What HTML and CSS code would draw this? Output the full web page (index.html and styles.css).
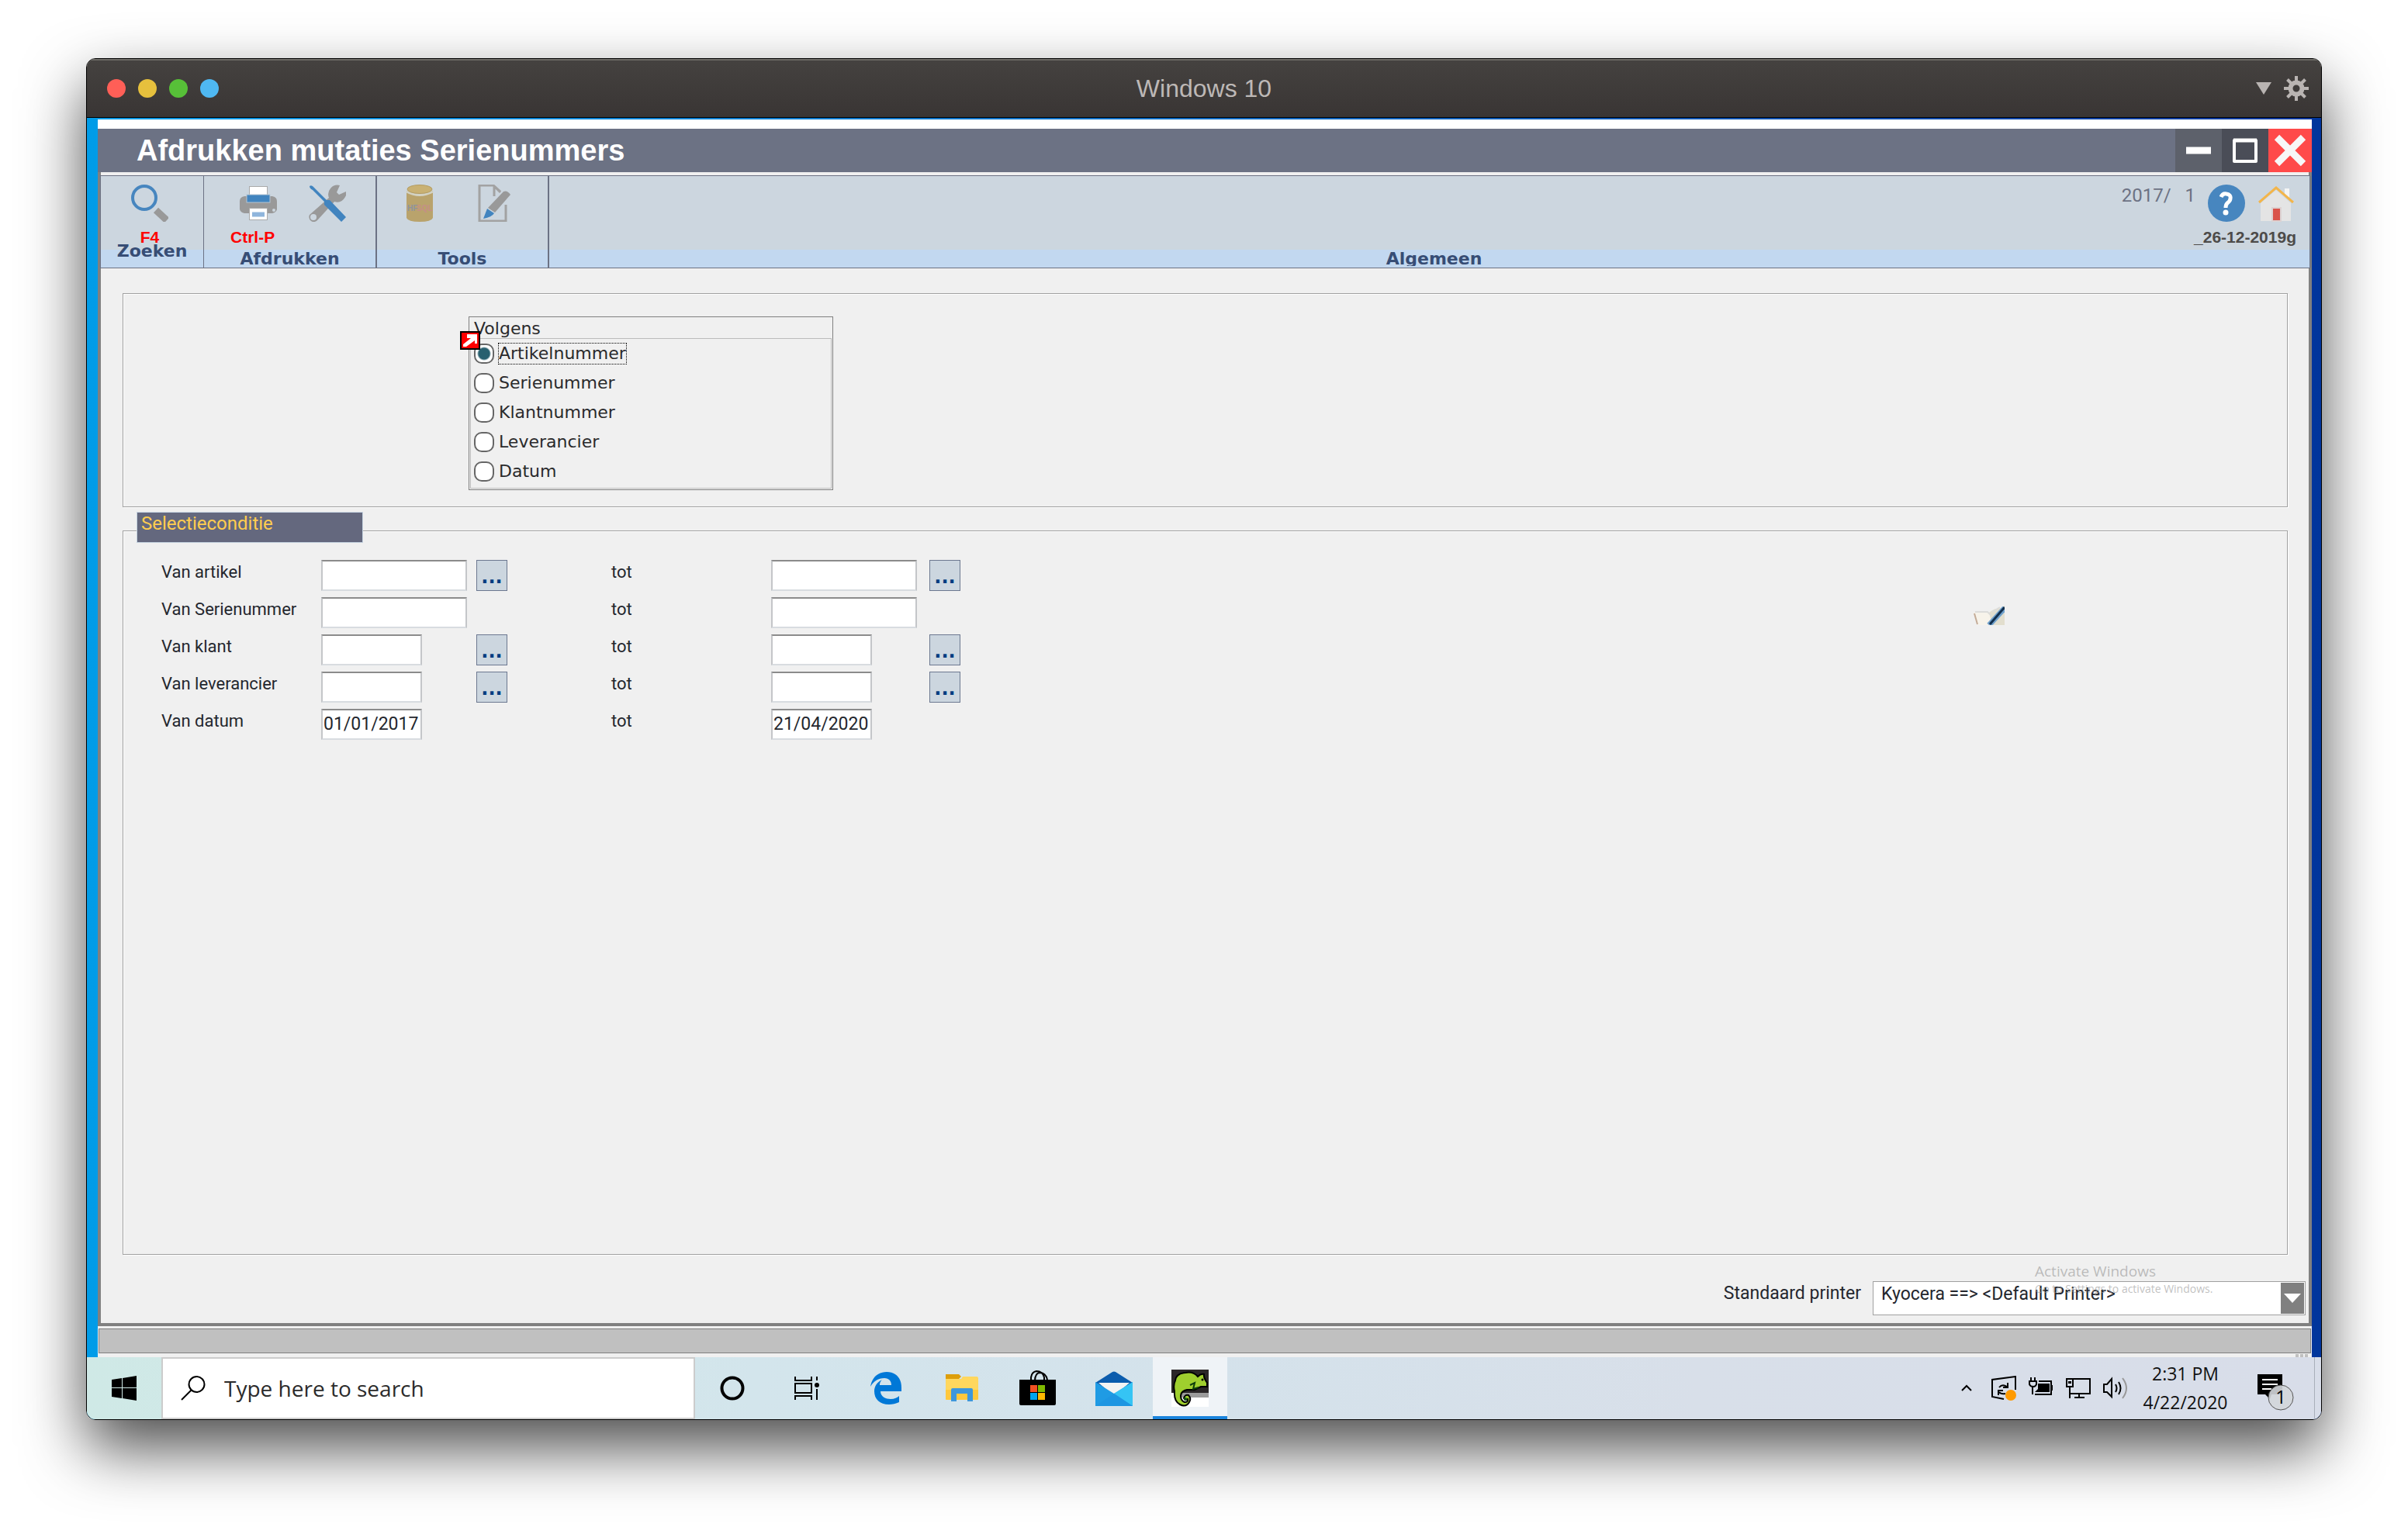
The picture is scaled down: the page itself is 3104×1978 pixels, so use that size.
FILE: index.html
```html
<!DOCTYPE html>
<html lang="nl">
<head>
<meta charset="utf-8">
<title>Windows 10</title>
<link rel="stylesheet" href="styles.css">
</head>
<body>
<div class="vm">
  <header class="vm-bar">
    <div class="lights">
      <button class="light red" aria-label="Close"></button>
      <button class="light yellow" aria-label="Minimize"></button>
      <button class="light green" aria-label="Zoom"></button>
      <button class="light blue" aria-label="Coherence"></button>
    </div>
    <h1 class="vm-title">Windows 10</h1>
    <div class="vm-tools">
      <button class="plain" aria-label="Menu"><svg width="20" height="16" viewBox="0 0 20 16"><path d="M0 0H20L10 16Z" fill="#b9b4b2"/></svg></button>
      <button class="plain" aria-label="Settings"><svg width="32" height="32" viewBox="-16 -16 32 32"><g fill="none" stroke="#b9b4b2"><circle r="7.5" stroke-width="6"/><path stroke-width="4" d="M0-9V-16M0 9V16M-9 0H-16M9 0H16M6.500-6.500L11.500-11.500M-6.500-6.500L-11.500-11.500M6.500 6.500L11.500 11.500M-6.500 6.500L-11.500 11.500"/></g></svg></button>
    </div>
  </header>

  <div class="desktop">
    <main class="app">
      <div class="app-bar">
        <h2 class="app-title">Afdrukken mutaties Serienummers</h2>
        <button class="win min" aria-label="Minimaliseren"><svg width="32" height="32" viewBox="0 0 32 32"><path d="M0 16H32" stroke="#fff" stroke-width="9"/></svg></button>
        <button class="win max" aria-label="Maximaliseren"><svg width="32" height="32" viewBox="0 0 32 32"><rect x="2" y="3" width="28" height="27" fill="none" stroke="#fff" stroke-width="4" stroke-linejoin="round"/><path d="M1 3H31" stroke="#fff" stroke-width="5"/></svg></button>
        <button class="win close" aria-label="Sluiten"><svg width="42" height="42" viewBox="0 0 42 42"><path d="M4 4L38 38M38 4L4 38" stroke="#f7f7f7" stroke-width="9"/></svg></button>
      </div>

      <div class="frame">
        <nav class="toolbar">
          <div class="group zoeken">
            <div class="tools">
              <button class="tool"><svg width="48" height="48" viewBox="0 0 48 48"><circle cx="17" cy="17" r="15" fill="none" stroke="#4786bf" stroke-width="4"/><path d="M32 33L46 46" stroke="#999" stroke-width="9"/></svg><span class="key">F4</span></button>
            </div>
            <div class="caption">Zoeken</div>
          </div>
          <div class="group afdrukken">
            <div class="tools">
              <button class="tool wide"><svg width="48" height="48" viewBox="0 0 48 48"><path d="M6 15H42Q48 16 48 22V32Q47 36 42 37H6Q1 36 0 32V22Q0 16 6 15Z" fill="#999"/><rect x="12.500" y="2.500" width="23" height="13" fill="#fff" stroke="#aaa"/><rect x="9" y="13" width="30" height="10" fill="#4184bf" stroke="#b5c5d3"/><rect x="12.500" y="30.500" width="23" height="15" fill="#fff" stroke="#aaa"/><path d="M16 37H32M16 40H32" stroke="#8fb5dc" stroke-width="3"/><circle cx="44" cy="33" r="2" fill="#ccd6df"/></svg><span class="key">Ctrl-P</span></button>
              <button class="tool" aria-label="Instellingen"><svg width="48" height="48" viewBox="0 0 48 48"><path d="M40 1A12 12 0 0 0 26 17L1 39Q-1 44 3 47Q8 50 12 45L33 22Q43 25 48 14V9L39 13L36 10Z" fill="#999"/><circle cx="6" cy="42" r="4" fill="#ccd6df"/><path d="M1 2Q4 0 7 4L23 20H27L48 42L42 48L20 26V22L5 7Q1 5 1 2Z" fill="#4184bf"/></svg></button>
            </div>
            <div class="caption">Afdrukken</div>
          </div>
          <div class="group extra">
            <div class="tools">
              <button class="tool" aria-label="HFSQL"><svg width="48" height="48" viewBox="0 0 48 48"><path d="M7 8Q24 17 41 8V43Q39 48 24 48Q9 48 7 43Z" fill="#b9a36c"/><path d="M7 9Q24 18 41 9" fill="none" stroke="#d3d2c3" stroke-width="3"/><ellipse cx="24" cy="6" rx="16" ry="5.500" fill="#c9b173" stroke="#b39c62"/><text x="8" y="34" class="db-a">HF</text><text x="20" y="34" class="db-b">SQL</text></svg></button>
              <button class="tool" aria-label="Bewerken"><svg width="48" height="48" viewBox="0 0 48 48"><path d="M30 9L21 1H3V47H37V26M22 1V15M22 2L30 10" fill="none" stroke="#a2a2a2" stroke-width="3"/><path d="M14 30L34 9Q39 7 43 13L23 36Z" fill="#999"/><path d="M13 31L22 37Q19 42 8 44Z" fill="#4184bf"/></svg></button>
            </div>
            <div class="caption">Tools</div>
          </div>
          <div class="group general">
            <div class="tools">
              <span class="period">2017/&nbsp;&nbsp; 1</span>
              <button class="tool" aria-label="Help"><svg width="48" height="48" viewBox="0 0 48 48"><circle cx="24" cy="24" r="24" fill="#4786bf"/><path d="M17 16Q19 11 24 12Q30 13 29 18Q29 21 25 24Q23 26 23 30" fill="none" stroke="#fff" stroke-width="5"/><circle cx="23" cy="36" r="3.500" fill="#fff"/></svg></button>
              <button class="tool" aria-label="Home"><svg width="48" height="48" viewBox="0 0 48 48"><path d="M35 5H41V17L35 12Z" fill="#f4f4f4"/><path d="M4 24L24 7L43 24V47H4Z" fill="#e4e4e4"/><path d="M19 30H30V47H19Z" fill="#d9534a" stroke="#dcd2d2" stroke-width="2"/><path d="M2 23L24 4L46 23" fill="none" stroke="#f3b54a" stroke-width="3"/></svg></button>
            </div>
            <div class="release">_26-12-2019g</div>
            <div class="caption clipped">Algemeen</div>
          </div>
        </nav>

        <form class="form">
          <section class="panel">
            <fieldset class="choice">
              <legend>Volgens</legend>
              <div class="options">
                <label><input type="radio" name="volgens" checked><span class="focus">Artikelnummer</span></label>
                <label><input type="radio" name="volgens"><span>Serienummer</span></label>
                <label><input type="radio" name="volgens"><span>Klantnummer</span></label>
                <label><input type="radio" name="volgens"><span>Leverancier</span></label>
                <label><input type="radio" name="volgens"><span>Datum</span></label>
              </div>
              <svg class="marker" width="26" height="24" viewBox="0 0 26 24"><rect x="1" y="1" width="24" height="22" fill="#f00" stroke="#000" stroke-width="2"/><path d="M9 4H22V16H19V12L8 20H4V17L14 9H9Z" fill="#fff"/></svg>
            </fieldset>
          </section>

          <section class="panel selection">
            <h3 class="badge">Selectieconditie</h3>
            <div class="selection-body">
              <div class="grid">
                <label class="c1" for="a1">Van artikel</label><input class="c2" id="a1"><button type="button" class="c3 pick">...</button>
                <label class="c4" for="a2">tot</label><input class="c5" id="a2"><button type="button" class="c6 pick">...</button>
                <label class="c1" for="s1">Van Serienummer</label><input class="c2" id="s1">
                <label class="c4" for="s2">tot</label><input class="c5" id="s2">
                <label class="c1" for="k1">Van klant</label><input class="c2 short" id="k1"><button type="button" class="c3 pick">...</button>
                <label class="c4" for="k2">tot</label><input class="c5 short" id="k2"><button type="button" class="c6 pick">...</button>
                <label class="c1" for="l1">Van leverancier</label><input class="c2 short" id="l1"><button type="button" class="c3 pick">...</button>
                <label class="c4" for="l2">tot</label><input class="c5 short" id="l2"><button type="button" class="c6 pick">...</button>
                <label class="c1" for="d1">Van datum</label><input class="c2 short" id="d1" value="01/01/2017">
                <label class="c4" for="d2">tot</label><input class="c5 short" id="d2" value="21/04/2020">
              </div>
              <svg class="note" width="40" height="28" viewBox="0 0 40 28"><path d="M0 12L16 11Q20 11 22 16L24 28H6Z" fill="#f7f3ea"/><path d="M1 13L5 27" stroke="#c4ac98" stroke-width="2"/><path d="M20 12Q26 6 36 6L40 3V28H24Z" fill="#e2dece"/><path d="M2 11H18L22 15M24 11L34 5" fill="none" stroke="#dcdcda" stroke-width="2"/><path d="M20 28L40 6" stroke="#6fa0cc" stroke-width="7"/><path d="M21 27L40 5" stroke="#12304f" stroke-width="3"/></svg>
            </div>
          </section>

          <div class="printer">
            <label for="printer">Standaard printer</label>
            <div class="combo">
              <select id="printer"><option>Kyocera ==&gt; &lt;Default Printer&gt;</option></select>
              <span class="arrow"><svg width="22" height="12" viewBox="0 0 22 12"><path d="M0 0H22L11 12Z" fill="#fff"/></svg></span>
            </div>
            <div class="watermark"><p class="wm-title">Activate Windows</p><p class="wm-text">Go to Settings to activate Windows.</p></div>
          </div>
        </form>
      </div>
      <div class="status"></div>
      <div class="grip"><i></i><i></i><i></i></div>
    </main>

    <footer class="taskbar">
      <button class="start" aria-label="Start"><svg width="32" height="32" viewBox="0 0 32 32"><path d="M0 5L13 3V15H0ZM14 3L32 0V15H14ZM0 16H13V29L0 27ZM14 16H32V32L14 29Z"/></svg></button>
      <label class="search">
        <svg width="32" height="32" viewBox="0 0 32 32" fill="none" stroke="#000" stroke-width="2"><circle cx="20.500" cy="11" r="10"/><path d="M14 18L1 31"/></svg>
        <input type="search" placeholder="Type here to search" aria-label="Search">
      </label>
      <div class="pinned">
        <button class="task" aria-label="Cortana"><svg width="32" height="32" viewBox="0 0 32 32"><circle cx="16" cy="16" r="13.500" fill="none" stroke="#000" stroke-width="4"/></svg></button>
        <button class="task" aria-label="Task View"><svg width="32" height="30" viewBox="0 0 32 30" fill="none" stroke="#000" stroke-width="2"><path d="M1 0V5H22V0M1 30V25H22V30M1 9H22V21H1ZM29 0V5M29 16V30"/><circle cx="29" cy="11" r="3" fill="#000" stroke="none"/></svg></button>
        <button class="task edge" aria-label="Edge"><svg width="40" height="42" viewBox="0 0 40 42"><path d="M0 19C2 6 11 0 21 0C33 0 40 8 40 20V25H13C13 32 20 35 26 35C31 35 35 33 37 31V39C33 41 28 42 24 42C12 42 5 35 5 25C5 18 9 13 15 10C12 13 12 16 12 17H27C27 11 23 8 18 8C10 8 4 12 0 19Z" fill="#0078d7"/></svg></button>
        <button class="task" aria-label="Explorer"><svg width="42" height="36" viewBox="0 0 42 36"><path d="M0 6H20L22 3H40Q42 3 42 5V33H0Z" fill="#ffd75e"/><path d="M0 20H42V31Q42 33 40 33H2Q0 33 0 31Z" fill="#ffc83d"/><path d="M0 0H17L20 3L17 6H0Z" fill="#dd9e0b"/><path d="M7 35V20Q7 18 9 18H33Q35 18 35 20V35H28V25H14V35Z" fill="#3e97dc"/></svg></button>
        <button class="task" aria-label="Store"><svg width="48" height="46" viewBox="0 0 48 46"><path d="M15 14V9Q16 2 22 1Q30 1 32 9V14M20 14Q20 4 26 3Q34 3 36 12" fill="none" stroke="#000" stroke-width="2"/><path d="M0 12H47V43Q47 45 45 45H2Q0 45 0 43Z"/><path d="M14 19H23V28H14Z" fill="#f25022"/><path d="M24 19H33V28H24Z" fill="#7fba00"/><path d="M14 29H23V38H14Z" fill="#00a4ef"/><path d="M24 29H33V38H24Z" fill="#ffb900"/></svg></button>
        <button class="task" aria-label="Mail"><svg width="48" height="45" viewBox="0 0 48 45"><path d="M0 15L22 1Q24 0 26 1L48 15L24 30Z" fill="#0b5cad"/><path d="M4 15H44L24 32Z" fill="#f3f3f3"/><path d="M0 14V45H48V14L24 29Z" fill="#1f9be4"/><path d="M48 14V45L24 29Z" fill="#35c4f4"/><path d="M24 29L48 45H0Z" fill="#1d96e2"/></svg></button>
        <button class="task active" aria-label="WinDev"><svg width="48" height="48" viewBox="0 0 48 48"><path d="M0 0H48V30H0Z" fill="#2b2728"/><path d="M10 30H48V36H10Z" fill="#9b9b9b"/><path d="M0 30H10V36H48V48H0Z" fill="#fff"/><path d="M5 14Q6 5 18 4Q28 2 34 9Q38 5 42 6Q41 10 46 17V22H38L30 26H20Q12 28 12 34Q12 40 17 42Q22 42 21 38Q18 40 16 37Q17 32 22 33Q26 37 23 42Q19 49 11 45Q3 41 4 28Q2 20 5 14Z" fill="#9fcf2e" stroke="#000" stroke-width="2"/><path d="M24 20L30 17L28 25L35 23" fill="none" stroke="#0b3d0b" stroke-width="2"/><circle cx="40" cy="13" r="1.500"/><circle cx="18" cy="38" r="2" fill="#0c5a12"/></svg></button>
      </div>
      <div class="tray">
        <button class="plain chevron" aria-label="Hidden icons"><svg width="14" height="10" viewBox="0 0 14 10"><path d="M1 8L7 2L13 8" fill="none" stroke="#000" stroke-width="2"/></svg></button>
        <button class="plain" aria-label="Update"><svg width="32" height="32" viewBox="0 0 32 32" fill="none" stroke="#000" stroke-width="2"><path d="M31 18V1L1 5V27L16 30"/><path d="M10 15Q14 10 20 14M21 9V15H15M18 23Q12 24 10 21M9 25V19H15"/><circle cx="25" cy="25" r="7" fill="#ff9a00" stroke="none"/></svg></button>
        <button class="plain" aria-label="Battery"><svg width="32" height="32" viewBox="0 0 32 32" fill="none" stroke="#000" stroke-width="2"><path d="M13 7H29V24H8M30 12V19"/><path d="M12 10H27V21H8L12 17Z" fill="#000" stroke="none"/><path d="M3 2V7M8 2V7M1 7H10V11Q9 14 6 14Q2 14 1 11ZM5 14V24"/></svg></button>
        <button class="plain" aria-label="Network"><svg width="32" height="32" viewBox="0 0 32 32" fill="none" stroke="#000" stroke-width="2"><path d="M9 4H31V23H6M1 4H9V14H1ZM5 14V29M17 23V28M11 28H24M4 7V10M6 7V10"/></svg></button>
        <button class="plain" aria-label="Volume"><svg width="32" height="32" viewBox="0 0 32 32" fill="none" stroke="#000" stroke-width="2"><path d="M1 11H5L11 4V27L5 21H1ZM16 11Q19 16 16 21M20 8Q25 16 20 24"/><path d="M25 3Q35 16 25 29" stroke="#999"/></svg></button>
        <time class="clock"><span>2:31 PM</span><span>4/22/2020</span></time>
        <button class="plain notify" aria-label="1 notification"><svg width="50" height="52" viewBox="0 0 50 52"><path d="M2 2H34V28H20L18 34L12 28H2Z"/><path d="M8 9H28M8 15H28M8 21H20" stroke="#fff" stroke-width="2"/><circle cx="32" cy="32" r="16" fill="#d3d6da" fill-opacity=".9" stroke="#555"/><text x="32" y="40" text-anchor="middle" class="count">1</text></svg></button>
        <button class="peek" aria-label="Show desktop"></button>
      </div>
    </footer>
  </div>
</div>
</body>
</html>
```
FILE: styles.css
```css
* { box-sizing: border-box; margin: 0; }
button, input, select { font: inherit; color: inherit; border-radius: 0; }
button { padding: 0; border: 0; background: none; }
svg { display: block; }

body {
  min-height: 100vh;
  padding: 75px 111px 147px;
  display: flex;
  background: #fff;
  font: 22px/32px Roboto, "Open Sans", sans-serif;
  color: #24272e;
}

/* virtual machine window */
.vm {
  flex: 1;
  min-width: 0;
  display: flex;
  flex-direction: column;
  border: 1px solid #000;
  border-radius: 12px;
  overflow: hidden;
  box-shadow: 0 36px 80px rgba(0, 0, 0, .7);
}
.vm-bar {
  height: 76px;
  padding: 0 16px;
  display: grid;
  grid-template-columns: 1fr auto 1fr;
  align-items: center;
  background: linear-gradient(#454240, #393534);
  border-bottom: 1px solid #000;
  box-shadow: inset 0 2px 0 #6d6b66;
}
.lights { display: flex; gap: 16px; padding-left: 10px; }
.light { width: 24px; height: 24px; border-radius: 50%; }
.red { background: #ff5f57; }
.yellow { background: #e6c03d; }
.green { background: #57c038; }
.blue { background: #4fb8f2; }
.vm-title { font: 32px/40px "Liberation Sans", sans-serif; color: #bdb8b6; }
.vm-tools { display: flex; justify-content: flex-end; align-items: center; gap: 16px; }

.desktop {
  flex: 1;
  display: flex;
  flex-direction: column;
  padding-top: 2px;
  background: linear-gradient(to right, #009ce8, #00359c);
}

/* application window */
.app {
  flex: 1;
  margin: 0 12px 0 14px;
  display: flex;
  flex-direction: column;
  background: #f0f0f0;
  border-top: 12px solid #fff;
}
.app-bar {
  height: 56px;
  display: flex;
  align-items: center;
  background: #6c7284;
  color: #fff;
}
.app-title { flex: 1; padding-left: 50px; font: bold 38px/40px "Liberation Sans", sans-serif; }
.win { align-self: stretch; width: 60px; display: grid; place-items: center; }
.min { background: #5d616b; }
.max { background: #4a4d57; }
.close { width: 56px; background: #ff4a4a; }

.frame {
  flex: 1;
  display: flex;
  flex-direction: column;
  padding-top: 4px;
  border: 4px solid #808080;
  border-top: 0;
}
.toolbar {
  display: flex;
  margin: 0 -2px 0 -1px;
  border: 1px solid #6c7284;
  background: linear-gradient(#ccd6df 95px, #c2d8f0 95px);
}
.group {
  width: 223px;
  height: 118px;
  display: flex;
  flex-direction: column;
  border-right: 2px solid #6c7284;
}
.tools { display: flex; padding: 11px 0 0 34px; gap: 29px; height: 95px; }
.zoeken { width: 133px; border-right-width: 1px; }
.zoeken .tools { padding-left: 39px; }
.extra { width: 222px; }
.extra .tools { padding-left: 31px; gap: 50px; }
.tool { display: flex; flex-direction: column; align-items: center; gap: 8px; width: 48px; }
.wide { width: 72px; }
.wide .key { align-self: flex-start; }
.key { font: bold 21px/24px "Liberation Sans", sans-serif; color: #f00; }
.caption {
  height: 23px;
  text-align: center;
  font: bold 22px/23px "DejaVu Sans", sans-serif;
  color: #374d75;
}
.zoeken .caption { margin-top: -10px; }
.general { flex: 1; border-right: 0; }
.general .tools { height: 59px; padding: 11px 19px 0 0; gap: 16px; justify-content: flex-end; }
.clipped { height: 21px; padding-left: 12px; overflow: hidden; }
.period { padding: 2px 0 0; font-size: 24px; line-height: 24px; color: #6c7284; }
.release {
  align-self: flex-end;
  height: 24px;
  margin: 8px 17px 4px 0;
  white-space: nowrap;
  font: bold 21px/24px "Liberation Sans", sans-serif;
  color: #4d4b49;
}
.db-a, .db-b { font: bold 10px "Liberation Sans", sans-serif; fill: #8d93a0; }
.db-b { fill: #c58f86; }

/* form */
.form { flex: 1; display: flex; flex-direction: column; padding: 32px 0 0 28px; }
.panel {
  margin-right: 27px;
  border: 1px solid #a0a0a0;
  box-shadow: 1px 1px 0 #fff, inset 1px 1px 0 #fff;
  padding: 29px 0 21px 445px;
}
.choice {
  position: relative;
  width: 470px;
  padding: 0 1px 1px;
  margin: 0;
  border: 1px solid #808080;
  font: 22px/38px "DejaVu Sans", sans-serif;
  color: #2a2a2c;
}
.choice legend { float: left; width: 100%; padding: 3px 0 0 5px; line-height: 24px; }
.options { clear: both; border: 1px solid #bcbcbc; padding: 0 0 2px 4px; }
.options label { display: flex; align-items: center; gap: 6px; height: 38px; }
.options input {
  appearance: none;
  width: 26px;
  height: 26px;
  margin: 0;
  border: 2px solid #666;
  border-radius: 10px;
  background: #fff;
}
.options input:checked { background: radial-gradient(circle, #28606f 7px, #fff 9px); }
.focus { line-height: 26px; outline: 1px dotted #000; }
.marker { position: absolute; left: -12px; top: 18px; }

.selection {
  flex: 1;
  margin-top: 30px;
  padding: 0;
}
.badge {
  width: 292px;
  height: 40px;
  margin: -25px 0 22px 17px;
  padding-left: 5px;
  border: 1px solid #c5d3e0;
  background: #64687e;
  color: #ffcd4f;
  font-size: 24px;
  font-weight: 400;
  line-height: 28px;
}
.selection-body { display: flex; justify-content: space-between; padding: 0 364px 0 49px; }
.grid {
  display: grid;
  grid-template-columns: 206px 200px 174px 206px 204px 40px;
  grid-auto-rows: 40px;
  row-gap: 8px;
}
.c1 { grid-column: 1; }
.c2 { grid-column: 2; }
.c3 { grid-column: 3; }
.c4 { grid-column: 4; }
.c5 { grid-column: 5; }
.c6 { grid-column: 6; }
.grid input {
  width: 188px;
  padding: 0 1px;
  border: 2px solid #c4c6c9;
  border-top-color: #8b8b8b;
  border-bottom-color: #d8dce0;
  background: #fff;
  font-size: 23px;
}
.grid .short { width: 130px; }
.pick {
  width: 40px;
  height: 40px;
  padding-top: 4px;
  border: 1px solid #6c7890;
  background: #ccd6df;
  font: bold 24px/32px "DejaVu Sans", sans-serif;
  color: #003c80;
}
.note { margin-top: 56px; }

.printer {
  position: relative;
  display: flex;
  justify-content: flex-end;
  gap: 15px;
  padding: 34px 4px 10px 0;
  font-size: 23px;
}
.combo { position: relative; width: 558px; height: 44px; }
.combo select {
  appearance: none;
  width: 100%;
  height: 100%;
  padding: 0 40px 10px 10px;
  border: 1px solid #a0a0a0;
  background: #fff;
}
.arrow {
  position: absolute;
  top: 2px;
  right: 2px;
  bottom: 2px;
  width: 30px;
  display: grid;
  place-items: center;
  background: #808080;
  pointer-events: none;
}
.watermark {
  position: absolute;
  top: 9px;
  right: 116px;
  width: 237px;
  font-family: "Open Sans", sans-serif;
  color: rgba(150, 150, 150, .6);
  white-space: nowrap;
  pointer-events: none;
}
.wm-title { font-size: 19px; line-height: 24px; }
.wm-text { font-size: 14px; line-height: 22px; }

.status { height: 32px; margin: 3px 1px 0; background: #c0c0c0; border: 1px solid #808080; }
.grip { height: 5px; display: flex; justify-content: flex-end; align-items: flex-end; gap: 2px; padding-right: 5px; }
.grip i { width: 4px; height: 4px; background: #c0c0c0; }

/* Windows taskbar */
.taskbar {
  height: 80px;
  display: flex;
  background: linear-gradient(to right, #cfe9e6 0, #d3e5ec 30%, #d4e2eb 50%, #d8dfe9 72%, #d8dde9 100%);
  font-family: "Open Sans", sans-serif;
}
.start { width: 96px; display: grid; place-items: center; }
.search {
  width: 688px;
  display: flex;
  align-items: center;
  gap: 24px;
  padding-left: 23px;
  border: 2px solid #ccc;
  background: #fff;
}
.search input { flex: 1; padding: 0; border: 0; outline: 0; background: none; font-size: 28px; line-height: 40px; }
.search input::placeholder { color: #2b2b2b; opacity: 1; }
.pinned { display: flex; gap: 2px; }
.task { width: 96px; display: grid; place-items: center; }
.task:first-child { margin-right: -2px; }
.edge { margin-left: 4px; }
.active { background: #eff3f7; border-bottom: 4px solid #1a84dc; border-top: 4px solid transparent; }
.tray { flex: 1; display: flex; justify-content: flex-end; align-items: center; gap: 16px; }
.chevron { margin-right: 9px; }
.clock { width: 112px; margin-left: 2px; display: flex; flex-direction: column; text-align: center; font-size: 23px; line-height: 37px; color: #111; }
.notify { margin: 20px 9px 0 19px; align-self: flex-start; }
.count { font: 24px "Open Sans", sans-serif; fill: #000; }
.peek { width: 9px; align-self: stretch; border-left: 1px solid #a9afba; }
```
